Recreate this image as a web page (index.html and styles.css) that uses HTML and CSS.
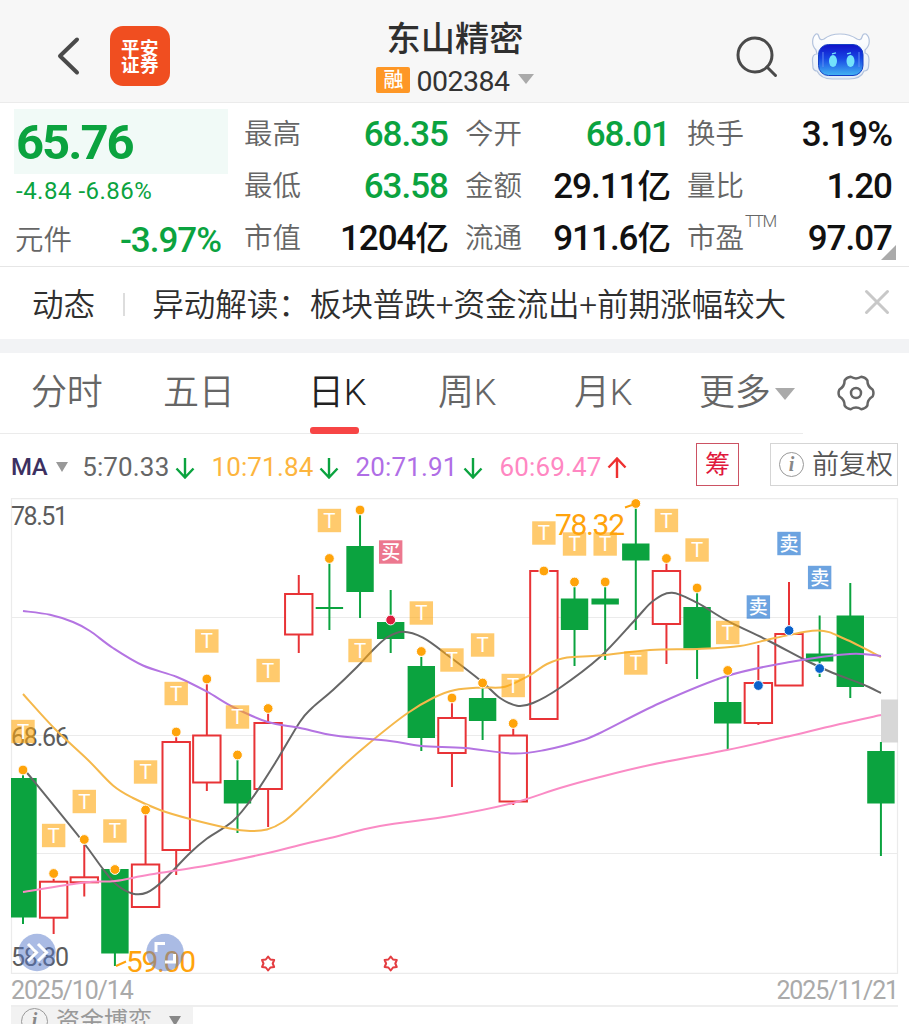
FILE: index.html
```html
<!DOCTYPE html>
<html lang="zh-CN">
<head>
<meta charset="utf-8">
<title>东山精密 002384</title>
<link rel="stylesheet" href="styles.css">
</head>
<body>
<header class="topbar">
  <div class="side">
    <svg class="back" width="24" height="40" viewBox="0 0 24 40"><path d="M20 3.500 3 20 20 36.500" /></svg>
    <div class="logo"><span>平安</span><span>证券</span></div>
  </div>
  <div class="title">
    <h1>东山精密</h1>
    <div class="code"><span class="tag">融</span><span class="num">002384</span><i class="caret"></i></div>
  </div>
  <div class="side right">
    <svg class="search" width="44" height="44" viewBox="0 0 44 44"><circle cx="20" cy="20" r="17"/><path d="M32 32 40.500 40.500"/></svg>
    <svg width="60" height="50" viewBox="0 0 60 50">
      <defs>
        <linearGradient id="face" x1="0" y1="0" x2="0" y2="1"><stop offset="0" stop-color="#1010c8"/><stop offset=".45" stop-color="#1747e4"/><stop offset="1" stop-color="#43b4f2"/></linearGradient>
        <linearGradient id="shell" x1="0" y1="0" x2="0" y2="1"><stop offset="0" stop-color="#fff"/><stop offset="1" stop-color="#e2ebf7"/></linearGradient>
      </defs>
      <path fill="url(#shell)" stroke="#b3c3dd" stroke-width="1.200" d="M5 2C1 5 0 13 5 18L6 22Q1 22 1.500 29L2 36Q3 39 6 39Q10 47 21 47H38Q50 47 53 39Q57 39 57.500 35L58 28Q58 22 54 21L54 18C60 13 59 5 55 2Q52 1 51 5Q50 9 46 7Q39 2 29 2Q19 2 13 7Q9 9 8 5Q7 1 5 2Z"/>
      <rect x="7.500" y="12.500" width="44.500" height="31" rx="10" fill="url(#face)" stroke="#123fc5" stroke-width="1"/>
      <path d="M12 20v15M48 20v15" stroke="#6b93f5" stroke-width="1.500" opacity=".6"/>
      <ellipse cx="22" cy="29" rx="4" ry="6" fill="#73e2fb"/><ellipse cx="39.500" cy="29" rx="4" ry="6" fill="#73e2fb"/>
      <path d="M21 21.800 25 20.800M36 21.800 40 20.800" stroke="#73e2fb" stroke-width="1.300"/>
    </svg>
  </div>
</header>

<section class="quote">
  <div class="main">
    <div class="price">65.76</div>
    <div class="change">-4.84 -6.86%</div>
    <div class="cell sector"><span>元件</span><b class="down">-3.97%</b></div>
  </div>
  <div class="col">
    <div class="cell"><span>最高</span><b class="down">68.35</b></div>
    <div class="cell"><span>最低</span><b class="down">63.58</b></div>
    <div class="cell"><span>市值</span><b>1204<em>亿</em></b></div>
  </div>
  <div class="col">
    <div class="cell"><span>今开</span><b class="down">68.01</b></div>
    <div class="cell"><span>金额</span><b>29.11<em>亿</em></b></div>
    <div class="cell"><span>流通</span><b>911.6<em>亿</em></b></div>
  </div>
  <div class="col">
    <div class="cell"><span>换手</span><b>3.19%</b></div>
    <div class="cell"><span>量比</span><b>1.20</b></div>
    <div class="cell"><span>市盈<sup>TTM</sup></span><b>97.07</b></div>
  </div>
  <i class="corner"></i>
</section>

<section class="news">
  <span>动态</span><i class="bar"></i><p>异动解读：板块普跌+资金流出+前期涨幅较大</p>
  <svg width="26" height="26" viewBox="0 0 26 26"><path d="M2.500 2.500 23.500 23.500M23.500 2.500 2.500 23.500"/></svg>
</section>

<nav class="tabs">
  <a>分时</a><a>五日</a><a class="on">日K</a><a>周K</a><a>月K</a><a>更多<i class="caret"></i></a>
  <svg class="gear" width="38" height="38" viewBox="0 0 38 38"><path d="M35.600 22.500Q30.300 25.500 30.400 31.600Q28.200 34.800 24.300 35.200Q19 32 13.700 35.200Q9.800 34.800 7.600 31.600Q7.700 25.500 2.400 22.500Q.7 19 2.400 15.500Q7.700 12.500 7.600 6.400Q9.800 3.200 13.700 2.800Q19 6 24.300 2.800Q28.200 3.200 30.400 6.400Q30.300 12.500 35.600 15.500Q37.300 19 35.600 22.500Z"/><circle cx="19" cy="19" r="5"/></svg>
</nav>

<section class="ma">
  <span class="name">MA</span><i class="caret"></i>
  <span class="m5">5:70.33</span><svg class="arr dn" width="20" height="22" viewBox="0 0 20 22"><path d="M10 1V20M1.500 11.500 10 20.500 18.500 11.500"/></svg>
  <span class="m10">10:71.84</span><svg class="arr dn" width="20" height="22" viewBox="0 0 20 22"><path d="M10 1V20M1.500 11.500 10 20.500 18.500 11.500"/></svg>
  <span class="m20">20:71.91</span><svg class="arr dn" width="20" height="22" viewBox="0 0 20 22"><path d="M10 1V20M1.500 11.500 10 20.500 18.500 11.500"/></svg>
  <span class="m60">60:69.47</span><svg class="arr up" width="20" height="22" viewBox="0 0 20 22"><path d="M10 21V2M1.500 10.500 10 1.500 18.500 10.500"/></svg>
  <span class="chip">筹</span>
  <span class="adjust"><i class="info">i</i>前复权</span>
</section>

<svg class="chart" id="chart" width="909" height="476" viewBox="0 498 909 476"></svg>

<div class="dates"><span>2025/10/14</span><span>2025/11/21</span></div>
<footer class="sub"><div class="picker"><i class="info">i</i><span>资金博弈</span><i class="caret"></i></div></footer>
<script src="chart.js"></script>
</body>
</html>
```
FILE: styles.css
```css
* { box-sizing: border-box; }
body {
  margin: 0; width: 909px; height: 1024px; overflow: hidden; background: #fff; color: #2f2f2f;
  font-family: Roboto, "Noto Sans CJK SC", sans-serif;
}
i, em { font-style: normal; }
svg { display: block; flex: none; }

.topbar { height: 103px; background: #f7f7f7; border-bottom: 1px solid #ebebeb; display: flex; justify-content: space-between; padding: 0 38px 0 57px; }
.side { width: 262px; display: flex; align-items: center; padding-top: 9px; gap: 29px; }
.side.right { width: 280px; justify-content: flex-end; gap: 32px; padding-top: 11px; }
.back path { fill: none; stroke: #4a4a4a; stroke-width: 4; stroke-linecap: round; stroke-linejoin: round; }
.logo { width: 60px; height: 60px; border-radius: 13px; background: #f04e20; color: #fff; display: flex; flex-direction: column; align-items: center; justify-content: center; font: 700 18.500px/17px "Noto Sans CJK SC", sans-serif; letter-spacing: .5px; padding-top: 1px; }
.title { display: flex; flex-direction: column; align-items: center; width: 200px; }
h1 { margin: 14px 0 0; font: 500 34.200px/44px "Noto Sans CJK SC", sans-serif; }
.code { display: flex; align-items: center; height: 44px; }
.tag { width: 34px; height: 26px; background: #fe9726; color: #fff; border-radius: 2px; font: 500 20px/24px "Noto Sans CJK SC", sans-serif; text-align: center; margin-right: 6px; }
.num { font-size: 28.500px; letter-spacing: -.5px; padding-top: 2px; color: #333; }
.caret { border: 8px solid transparent; border-top: 10px solid #aaa; border-bottom: 0; }
.code .caret { margin-left: 8px; margin-top: -2px; }
.search { fill: none; stroke: #4a4a4a; stroke-width: 3; stroke-linecap: round; }

.quote { height: 164px; border-bottom: 1px solid #e6e6e6; position: relative; display: grid; grid-template-columns: 213px 204px 205px 205px; column-gap: 17px; padding: 6px 0 0 14px; }
.main { width: 214px; }
.price { height: 65px; background: #f1faf7; color: #0ba33f; font-weight: 700; font-size: 49px; line-height: 67px; letter-spacing: -2px; padding-left: 2px; }
.change { color: #0ba33f; height: 39px; line-height: 34px; font-size: 24px; letter-spacing: .5px; padding-left: 2px; }
.cell { height: 52px; line-height: 52px; display: flex; justify-content: space-between; white-space: nowrap; }
.cell span { color: #666; font-size: 28.500px; font-weight: 350; }
.cell b { font-size: 35px; font-weight: 500; letter-spacing: -1px; color: #111; }
.cell b.down { color: #0ba33f; }
.cell em { font-size: 33.500px; line-height: 0; }
.sector { padding: 2px 7px 0 1px; }
.cell sup { font-size: 17px; line-height: 0; vertical-align: 21px; letter-spacing: -1.500px; font-weight: 300; margin-left: 1px; }
.corner { position: absolute; right: 13px; bottom: 6px; border-left: 15px solid transparent; border-bottom: 15px solid #aaa; }

.news { height: 72px; display: flex; align-items: center; padding: 0 19px 2px 32px; font-size: 31.600px; font-weight: 350; }
.news .bar { width: 2px; height: 23px; background: #ddd; margin: 4px 27px 0 28px; }
.news p { margin: 0; flex: 1; white-space: nowrap; letter-spacing: -.1px; }
.news svg { fill: none; stroke: #c8c8c8; stroke-width: 3; stroke-linecap: round; margin-top: 0; }

.tabs { height: 95px; border-top: 14px solid #f2f3f5; padding-left: 31px; display: grid; grid-template-columns: 132px 145px 130px 136px 125px 138px 40px; background: linear-gradient(#ebebeb, #ebebeb) 0 100% / 803px 1px no-repeat; font-size: 36px; font-weight: 350; color: #666; }
.tabs a { height: 81px; line-height: 79px; display: flex; align-items: center; letter-spacing: -.3px; }
.tabs .on { color: #222; position: relative; }
.tabs .on::after { content: ""; position: absolute; left: 2px; bottom: 0; width: 49px; height: 7px; border-radius: 3px; background: #f74545; }
.tabs .caret { border-width: 12px 10px 0; margin-left: 5px; }
.gear { fill: none; stroke: #666; stroke-width: 2.500; stroke-linejoin: round; margin: 21px 0 0; }

.ma { height: 64px; padding: 2px 11px 0; display: flex; align-items: center; font-size: 26px; letter-spacing: .15px; white-space: nowrap; }
.ma .name { color: #3c3061; font-weight: 500; letter-spacing: -.5px; font-size: 24px; }
.ma > .caret { border-width: 10px 6.500px 0; border-top-color: #999; margin: 0 14px 0 9px; }
.arr { fill: none; stroke-width: 2.400; margin: 2px 16px 0 6px; }
.dn { stroke: #0ba33f; } .up { stroke: #ee3030; margin-right: 0; }
.m5 { color: #666; } .m10 { color: #fdb53e; } .m20 { color: #b06ee6; } .m60 { color: #ff87c2; }
.chip { width: 43px; height: 43px; border: 1.500px solid #cc5263; color: #e0183c; margin: -5px 31px 0 auto; text-align: center; line-height: 42px; font-size: 25px; letter-spacing: 0; }
.adjust { width: 128px; height: 43px; border: 1.500px solid #d5d5d5; margin-top: -5px; display: flex; align-items: center; padding-left: 8px; font-size: 27px; font-weight: 350; letter-spacing: 0; color: #555; line-height: 44px; }
.info { flex: none; width: 25px; height: 25px; border: 1.500px solid #999; border-radius: 50%; font: italic bold 20px/22px "Liberation Serif", serif; text-align: center; color: #888; margin-right: 8px; }

.chart text { font-family: Roboto, "Noto Sans CJK SC", sans-serif; }
.grid { fill: none; stroke: #ebebeb; stroke-width: 1.200; }
.gb { fill: #0ba33f; } .gw { stroke: #0ba33f; stroke-width: 2; }
.rb { fill: #fff; stroke: #e83336; stroke-width: 2; } .rw { stroke: #e83336; stroke-width: 2; }
.line { fill: none; stroke-width: 2; }
.ma5 { stroke: #666; } .ma10 { stroke: #f5b84b; } .ma20 { stroke: #b474e2; } .ma60 { stroke: #fa8bc5; }
.dot { stroke: #fff; stroke-width: 1; fill: #ffa40b; } .dot.buy { fill: #dd1e3e; } .dot.sell { fill: #0a62cc; }
.flag rect { fill: #ffa60c; fill-opacity: .6; } .flag text { fill: #fff; font-size: 20.500px; text-anchor: middle; }
.flag.buy rect { fill: #e01e44; } .flag.sell rect { fill: #0a66cc; }
.flag.buy text, .flag.sell text { font-size: 19px; font-weight: 500; }
.axis { fill: #5c5c5c; font-size: 25px; }
.peak { fill: #ffa30c; font-size: 30px; }
.lead { stroke: #ffa30c; stroke-width: 2; fill: none; }
.star { fill: none; stroke: #e43d41; stroke-width: 2; stroke-linejoin: round; }
.fab circle { fill: #5577c9; fill-opacity: .5; } .fab path { fill: none; stroke: #fff; stroke-width: 3; }

.dates { height: 31px; display: flex; justify-content: space-between; padding: 0 11px; font-size: 25px; line-height: 34px; color: #aaa; letter-spacing: -1.150px; }
.sub { margin-left: 11px; width: 887px; height: 19px; border-top: 2px solid #eee; overflow: hidden; }
.picker { width: 182px; height: 40px; background: #f2f2f2; display: flex; align-items: flex-start; padding: 1px 0 0 10px; color: #999; font-size: 24px; line-height: 27px; }
.picker .info { width: 27px; height: 27px; margin-right: 8px; }
.picker .caret { border-width: 10px 6.500px 0; border-top-color: #888; margin: 8px 0 0 17px; }
```
FILE: chart.js
```js
// Daily candles in plot coordinates: colour, body top, body bottom, wick top, wick bottom
const candles = [
  ['g',778,917.5,774,924],['r',881.7,917.7,878,934],['r',877.3,882.3,845,896.5],['g',869,953.5,869,966],
  ['r',864.5,907,815,907],['r',742,850,737,875],['r',735.5,782.5,684,791],['g',780,803.5,760,833],
  ['r',723,789,713,827],['r',594,634.5,575,653],['g',607,609,563,630],['g',546,592,515,618],
  ['g',622,639,590,653],['g',666,738,657,751],['r',718,753,703,787],['g',698,721,688,740],
  ['r',735.5,801.5,728,805],['r',571,719,571,719],['g',598.5,630,586,666],['g',598.5,604.5,587,660],
  ['g',543.5,560.5,508,630],['r',571,624,563,664],['g',607,648.5,592,679],['g',702,723.5,676,750],
  ['r',683,723,645,725],['r',634,685.5,582,634],['g',653.5,661.5,615.5,677],['g',615.5,687,583,698],
  ['g',751,803.5,742,856]
];
const lines = {
  ma5: [[26,771.5],[80,838],[103,869],[117,885],[133,893.7],[147,892.5],[163,880.7],[190,853],[207,838.5],[233,821],[253,797],[277,760],[300,721.7],[312,708],[333,690],[357,667],[372,651],[387,637.5],[403,631.7],[423,637.7],[450,657],[482,681.7],[500,698],[517,705.7],[533,703],[560,687.7],[600,657],[635,620],[653,601],[672,592.7],[697,602.7],[727,620.7],[767,640],[807,661],[833,673],[862,684],[881,693]],
  ma10: [[23,694],[55,729],[88,760],[113,785.5],[133,798],[160,810],[190,819],[230,828.5],[250,831],[267,829.5],[283,822],[300,807.5],[343,766],[373,740],[407,713.5],[433,698],[455,690],[482,687.5],[505,686.7],[530,675],[547,664],[567,657.5],[600,655.5],[650,650],[697,649],[740,646],[775,638],[818,630.5],[845,639],[881,657]],
  ma20: [[23,611],[50,614.7],[73,622],[90,631],[113,648],[143,665.5],[177,677],[207,691.7],[233,707],[267,721.7],[300,728],[335,735.5],[390,741],[421,746],[465,748],[513,753.5],[545,750],[580,741],[600,733],[660,703],[727,676],[790,662],[850,654],[881,656]],
  ma60: [[23,892],[84,882.5],[115,881],[150,874.5],[210,865],[268,853],[300,845],[330,838],[380,826],[450,816],[513,803],[560,788],[600,777],[650,765],[727,750],[790,736],[840,724],[881,715]]
};
const dots = {0:770,1:873.5,2:839.5,3:869.5,4:810,5:732,6:679,7:755,8:708.5,10:558.5,11:510,12:620,13:651.5,14:698,15:683,16:723.5,17:571,18:582,19:582,20:503.5,21:558.5,22:588,23:670.5,24:685.5,25:630.5,26:668.5};
const flags = {0:731.5,1:835.5,2:801.5,3:831,4:772,5:693.5,6:641,7:717,8:670.5,10:520.5,11:650.5,12:552,13:613,14:660,15:645,16:685.5,17:533,18:544,19:544,20:663,21:520.5,22:550,23:632.5,24:607,25:543.5,26:577.5};
const X = i => 23 + i * 30.64;
const kind = i => i == 12 ? 'buy' : i > 23 ? 'sell' : '';

// Catmull-Rom spline through the given points
function spline(p) {
  let d = `M${p[0]}`;
  for (let i = 0; i < p.length - 1; i++) {
    const a = p[i - 1] || p[i], b = p[i], c = p[i + 1], e = p[i + 2] || c;
    d += `C${b[0] + (c[0] - a[0]) / 6} ${b[1] + (c[1] - a[1]) / 6} ${c[0] - (e[0] - b[0]) / 6} ${c[1] - (e[1] - b[1]) / 6} ${c}`;
  }
  return d;
}
function star(cx) {
  let d = '';
  for (let k = 0; k < 12; k++) {
    const r = k % 2 ? 4.6 : 7, t = k * Math.PI / 6;
    d += `${k ? 'L' : 'M'}${cx + r * Math.sin(t)} ${963.5 - r * Math.cos(t)}`;
  }
  return `<path class="star" d="${d}Z"/>`;
}

let s = '<path class="grid" d="M11.500 498.600H897.500V973.400H11.500ZM11.500 617.500H897.500M11.500 735.500H897.500M11.500 853.500H897.500"/>';
s += '<rect x="881" y="699.500" width="17" height="43" fill="#d7d7d7"/>';
s += '<text class="axis" x="11" y="525" textLength="57">78.51</text><text class="axis" x="11" y="745.500" textLength="58">68.66</text><text class="axis" x="11" y="966" textLength="58">58.80</text>';
candles.forEach(([c, t, b, hi, lo], i) => {
  const x = X(i), l = i ? x - 13.7 : 11;
  s += `<path class="${c}w" d="M${x} ${hi}V${lo}"/>`;
  s += c == 'g' ? `<rect class="gb" x="${l}" y="${t}" width="${x + 13.7 - l}" height="${b - t}"/>`
    : `<rect class="rb" x="${x - 13.7}" y="${t}" width="27.400" height="${b - t}"/>`;
});
for (const k in lines) s += `<path class="line ${k}" d="${spline(lines[k])}"/>`;
for (const i in dots) s += `<circle class="dot ${kind(i)}" cx="${X(i)}" cy="${dots[i]}" r="4.900"/>`;
for (const i in flags) {
  const k = kind(i), x = X(i), y = flags[i];
  s += `<g class="flag ${k}"><rect x="${x - 11.7}" y="${y - 11.7}" width="23.400" height="23.400"/><text x="${x}" y="${y + (k ? 7 : 7.3)}">${k == 'buy' ? '买' : k ? '卖' : 'T'}</text></g>`;
}
s += '<text class="peak" x="555" y="535" textLength="70">78.32</text><path class="lead" d="M625 507.500 632 505M116 966 126 961.500"/>';
s += '<text class="peak" x="126" y="971.500" textLength="70">59.00</text>';
s += star(268.1) + star(390.7);
s += '<g class="fab"><circle cx="37" cy="952.500" r="18.700"/><path d="M28 944 36.500 952.500 28 961M38 944 46.500 952.500 38 961"/></g>';
s += '<g class="fab"><circle cx="165" cy="952.500" r="18.700"/><path d="M156 952V943.500H165M174.500 954V962H165"/></g>';
document.getElementById('chart').innerHTML = s;
```
